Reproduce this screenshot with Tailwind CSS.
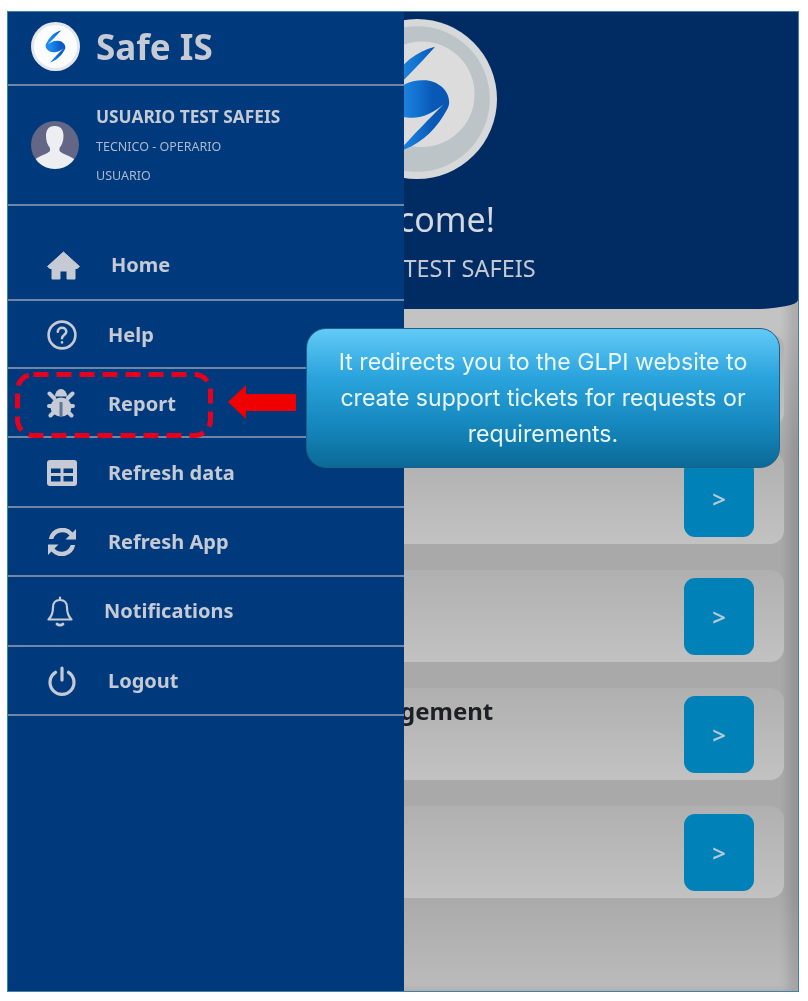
<!DOCTYPE html>
<html>
<head>
<meta charset="UTF-8">
<meta name="viewport" content="width=device-width, initial-scale=1.0">
<script src="https://cdn.jsdelivr.net/npm/@tailwindcss/browser@4"></script>
</head>
<body class="bg-white h-[1001px] overflow-hidden font-['Noto_Sans',sans-serif]">
<!-- phone frame -->
<div class="relative ml-[7px] mt-[11px] w-[792px] h-[981px] border border-[#3f83a3] overflow-hidden blur-[0.6px]">

    <!-- page behind the drawer -->
    <div class="h-full bg-[linear-gradient(180deg,#c3c3c3_0,#c3c3c3_32%,#a9a9a9_45%,#a9a9a9_90%,#bcbcbc_100%)] shadow-[inset_-10px_0_10px_rgba(0,0,0,0.12)]">
        <header class="h-[297px] bg-[#012c63] rounded-br-[44px_9px] flex flex-col items-center pl-[28px] pt-[7px]">
            <svg class="w-[160px] h-[160px] shrink-0" viewBox="0 0 100 100">
                <defs>
                    <linearGradient id="bigBlue" x1="0.25" x2="0.75" y1="0" y2="0"><stop offset="0" stop-color="#1e86dc"/><stop offset="0.5" stop-color="#1272d0"/><stop offset="1" stop-color="#0a58b6"/></linearGradient>
                </defs>
                <circle cx="50" cy="50" r="50" fill="#d6d8d9"/>
                <circle cx="50" cy="50" r="45.500" fill="#bcc4c8"/>
                <circle cx="53" cy="47" r="33" fill="#dcdcdd"/>
                <path fill="url(#bigBlue)" d="M61.300 17.400C50 20 40 28 33.500 39.600C31 43 29.900 45.500 29.900 48C29.900 56 38 62 46 61.700C54 62 61 58 66.500 53.400C58 62 48 72 38.700 82.600C50 79.500 60 71 66.500 60.400C69 56.500 70.100 54.500 70.100 52C70.100 44 62 38 54 38.300C46 38 39 42 33.500 46.600C42 38 52 28 61.300 17.400Z"/>
            </svg>
            <h1 class="text-[#d5d8de] text-[34px] leading-[46px] mt-[17px]">Welcome!</h1>
            <p class="text-[#c3c8d2] text-[23.5px] leading-[32px] mt-[10px] mr-[4px]">USUARIO TEST SAFEIS</p>
        </header>

        <div class="flex flex-col gap-[26px] pt-[25px] pr-[14px]">
            <div class="h-[92px] rounded-r-[14px] bg-[linear-gradient(180deg,#b0b0b0,#c2c2c2)]"></div>
            <div class="h-[92px] rounded-r-[14px] bg-[linear-gradient(180deg,#b0b0b0,#c2c2c2)] flex justify-end pt-[8px] pr-[30px]">
                <div class="w-[70px] h-[77px] rounded-[11px] bg-[#0082b8] flex items-center justify-center text-[#b5c9d6] text-[24px] font-semibold">&gt;</div>
            </div>
            <div class="h-[92px] rounded-r-[14px] bg-[linear-gradient(180deg,#b0b0b0,#c2c2c2)] flex justify-end pt-[8px] pr-[30px]">
                <div class="w-[70px] h-[77px] rounded-[11px] bg-[#0082b8] flex items-center justify-center text-[#b5c9d6] text-[24px] font-semibold">&gt;</div>
            </div>
            <div class="h-[92px] rounded-r-[14px] bg-[linear-gradient(180deg,#b0b0b0,#c2c2c2)] flex justify-between pt-[8px] pr-[30px]">
                <span class="font-bold text-[24px] leading-[30px] text-[#1d1f24] pl-[325px]">Management</span>
                <div class="w-[70px] h-[77px] rounded-[11px] bg-[#0082b8] flex items-center justify-center text-[#b5c9d6] text-[24px] font-semibold">&gt;</div>
            </div>
            <div class="h-[92px] rounded-r-[14px] bg-[linear-gradient(180deg,#b0b0b0,#c2c2c2)] flex justify-end pt-[8px] pr-[30px]">
                <div class="w-[70px] h-[77px] rounded-[11px] bg-[#0082b8] flex items-center justify-center text-[#b5c9d6] text-[24px] font-semibold">&gt;</div>
            </div>
        </div>
    </div>

    <!-- drawer -->
    <aside class="absolute left-0 top-0 bottom-0 w-[396px] bg-[#003a7d] text-[#c5cad4]">
        <div class="h-[74px] border-b-2 border-[#6f86a8] flex items-center pl-[23px] pb-[4px] gap-[16px]">
            <svg class="w-[49px] h-[49px] shrink-0" viewBox="0 0 100 100">
                <defs>
                    <linearGradient id="smallBlue" x1="0.25" x2="0.75" y1="0" y2="0"><stop offset="0" stop-color="#1a8cf0"/><stop offset="1" stop-color="#0a5cc8"/></linearGradient>
                </defs>
                <circle cx="50" cy="50" r="50" fill="#e3e6ea"/>
                <circle cx="50" cy="50" r="44" fill="#fbfcfd"/>
                <path fill="url(#smallBlue)" d="M61.300 17.400C50 20 40 28 33.500 39.600C31 43 29.900 45.500 29.900 48C29.900 56 38 62 46 61.700C54 62 61 58 66.500 53.400C58 62 48 72 38.700 82.600C50 79.500 60 71 66.500 60.400C69 56.500 70.100 54.500 70.100 52C70.100 44 62 38 54 38.300C46 38 39 42 33.500 46.600C42 38 52 28 61.300 17.400Z"/>
            </svg>
            <span class="text-[35px] font-bold leading-none">Safe IS</span>
        </div>
        <div class="h-[120px] border-b-2 border-[#6f86a8] flex items-center pl-[23px] gap-[17px]">
            <svg class="w-[48px] h-[48px] shrink-0" viewBox="0 0 48 48">
                <defs><clipPath id="avatarClip"><circle cx="24" cy="24" r="24"/></clipPath></defs>
                <g clip-path="url(#avatarClip)">
                    <rect width="48" height="48" fill="#636685"/>
                    <path fill="#eceef1" d="M24 5c6 0 8.500 4 8.500 10 0 5-1.500 9-4 12v3c3 3 8 4 13 7 2 1 3 3 3 11H3c0-8 1-10 3-11 5-3 10-4 13-7v-3c-2.500-3-4-7-4-12 0-6 2.500-10 8.500-10z"/>
                </g>
            </svg>
            <div class="pt-[3px]">
                <p class="text-[17.3px] font-bold leading-[29.5px]">USUARIO TEST SAFEIS</p>
                <p class="text-[12.5px] leading-[29.5px] text-[#aeb8cc]">TECNICO - OPERARIO</p>
                <p class="text-[12.5px] leading-[29.5px] text-[#aeb8cc]">USUARIO</p>
            </div>
        </div>

        <nav class="text-[20px] font-bold">
            <div class="h-[95px] border-b-2 border-[#6f86a8] flex items-center pt-[25px] pl-[39px]">
                <span class="w-[64px]">
                    <svg class="w-[33px] h-[29px]" viewBox="0 0 33 29" fill="currentColor" stroke="currentColor" stroke-width="1" stroke-linejoin="round"><path d="M16.500 1 32.500 15.500 30 17.500H28V28H20V20H13V28H5V17.500H3L.5 15.500z"/></svg>
                </span>
                <span>Home</span>
            </div>
            <div class="h-[68px] border-b-2 border-[#6f86a8] flex items-center pt-[2px] pl-[39px]">
                <span class="w-[61px]">
                    <svg class="w-[30px] h-[30px]" viewBox="0 0 30 30" fill="none" stroke="currentColor" stroke-width="2.600" stroke-linecap="round"><circle cx="15" cy="15" r="13.400"/><path d="M10.800 11.800c0-2.400 1.900-4 4.300-4s4.200 1.600 4.200 3.800c0 3.400-4.300 3.400-4.300 6.600"/><path d="M15 22.200v.3"/></svg>
                </span>
                <span>Help</span>
            </div>
            <div class="h-[69px] border-b-2 border-[#6f86a8] flex items-center pt-[2px] pl-[39px]">
                <span class="w-[61px]">
                    <svg class="w-[28px] h-[31px]" viewBox="0 0 28 31">
                        <g fill="none" stroke="currentColor" stroke-width="4" stroke-linecap="round"><path d="M2.500 5.500 7 10M25.500 5.500 21 10M2 18H6M26 18H22M3.500 27.500 8 23M24.500 27.500 20 23"/></g>
                        <path fill="currentColor" d="M8 8.500a6 7.500 0 0 1 12 0z"/>
                        <ellipse fill="currentColor" cx="14" cy="19" rx="10.500" ry="9.500"/>
                        <rect fill="#5f7698" x="12.500" y="14" width="3" height="14.500"/>
                    </svg>
                </span>
                <span>Report</span>
            </div>
            <div class="h-[70px] border-b-2 border-[#6f86a8] flex items-center pt-[2px] pl-[39px]">
                <span class="w-[61px]">
                    <svg class="w-[30px] h-[26px]" viewBox="0 0 30 26"><path fill="currentColor" fill-rule="evenodd" d="M3 0h24a3 3 0 0 1 3 3v20a3 3 0 0 1-3 3H3a3 3 0 0 1-3-3V3a3 3 0 0 1 3-3zM4 8.500V13h9.500V8.500zM16.500 8.500V13H26V8.500zM4 16v5.500h9.500V16zM16.500 16v5.500H26V16z"/></svg>
                </span>
                <span>Refresh data</span>
            </div>
            <div class="h-[69px] border-b-2 border-[#6f86a8] flex items-center pl-[39px]">
                <span class="w-[61px]">
                    <svg class="w-[30px] h-[28px]" viewBox="0 0 30 28" fill="currentColor"><path d="M29 1v10.500H18.500l4-4A9.500 9.500 0 0 0 6.300 11H1.800A13.800 13.800 0 0 1 25.600 4.400z"/><path d="M1 27V16.500h10.500l-4 4A9.500 9.500 0 0 0 23.700 17h4.500A13.800 13.800 0 0 1 4.400 23.600z"/></svg>
                </span>
                <span>Refresh App</span>
            </div>
            <div class="h-[70px] border-b-2 border-[#6f86a8] flex items-center pl-[39px]">
                <span class="w-[57px]">
                    <svg class="w-[26px] h-[31px]" viewBox="0 0 26 31" fill="none" stroke="currentColor" stroke-width="2.200" stroke-linejoin="round" stroke-linecap="round"><path d="M13 1.500v2.500"/><path d="M13 4c-4.500 0-7 3-7 7.500 0 6-1.500 9-4.500 12h23c-3-3-4.500-6-4.500-12C20 7 17.500 4 13 4z"/><path d="M10 28c1.500 1.600 4.500 1.600 6 0" stroke-width="2.800"/></svg>
                </span>
                <span>Notifications</span>
            </div>
            <div class="h-[69px] border-b-2 border-[#6f86a8] flex items-center pl-[39px]">
                <span class="w-[61px]">
                    <svg class="w-[30px] h-[30px]" viewBox="0 0 30 30" fill="none" stroke="currentColor" stroke-width="3.200" stroke-linecap="round"><path d="M15 2v12"/><path d="M8.500 6.300a12 12 0 1 0 13 0"/></svg>
                </span>
                <span>Logout</span>
            </div>
        </nav>
    </aside>

    <!-- annotations on top of the screen -->
    <svg class="absolute left-[7px] top-[360px] w-[198px] h-[66px]" viewBox="0 0 198 66" fill="none"><rect x="2.500" y="2.500" width="193" height="61" rx="16" stroke="#e6001e" stroke-width="5" stroke-dasharray="15 8"/></svg>
    <svg class="absolute left-[220px] top-[372px] w-[69px] h-[36px]" viewBox="0 0 69 36"><path fill="#f00000" d="M0 18 18 1v9h50v17H18v8z"/></svg>
    <div class="absolute left-[298px] top-[316px] w-[474px] h-[140px] rounded-[20px] border border-[#1f5f85] bg-[linear-gradient(180deg,#62caf7_0,#2aa3dc_35%,#1587bd_70%,#0b6a97_100%)] flex items-center justify-center text-center text-[#eaf7fc] text-[23.1px] leading-[36px] font-['Inter',sans-serif]">
        <p>It redirects you to the GLPI website to<br>create support tickets for requests or<br>requirements.</p>
    </div>
</div>
</body>
</html>
